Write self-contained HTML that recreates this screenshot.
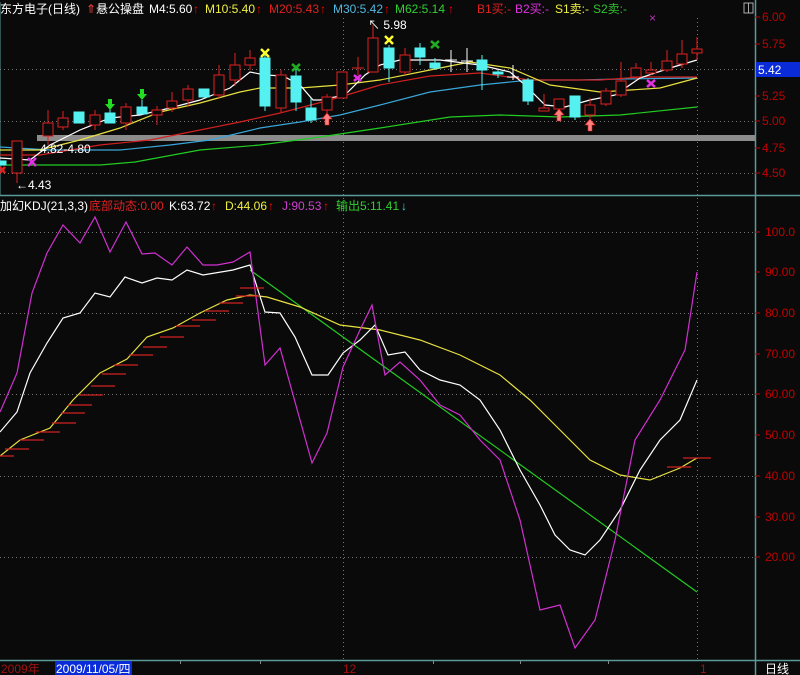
<!DOCTYPE html>
<html><head><meta charset="utf-8"><style>
html,body{margin:0;padding:0;background:#000;width:800px;height:675px;overflow:hidden}
svg{display:block}
text{font-family:"Liberation Sans","Noto Sans CJK SC",sans-serif;font-size:12px}
</style></head><body>
<svg width="800" height="675" viewBox="0 0 800 675" xmlns="http://www.w3.org/2000/svg">
<rect width="800" height="675" fill="#0a0a0a"/>
<!-- frame lines -->
<line x1="755.5" y1="0" x2="755.5" y2="675" stroke="#5a9a9a" stroke-width="1.5"/>
<line x1="0" y1="195.5" x2="800" y2="195.5" stroke="#5a9a9a" stroke-width="1.5"/>
<line x1="0" y1="660.5" x2="800" y2="660.5" stroke="#5a9a9a" stroke-width="1.5"/>
<line x1="0" y1="2" x2="0" y2="195" stroke="#5a9a9a"/>
<!-- gridlines -->
<g stroke="#777" stroke-dasharray="1,3">
<line x1="0" y1="69.5" x2="755" y2="69.5"/><line x1="0" y1="121.5" x2="755" y2="121.5"/><line x1="0" y1="173.5" x2="755" y2="173.5"/>
<line x1="0" y1="232.5" x2="755" y2="232.5"/><line x1="0" y1="313.5" x2="755" y2="313.5"/><line x1="0" y1="394.5" x2="755" y2="394.5"/><line x1="0" y1="476.5" x2="755" y2="476.5"/><line x1="0" y1="557.5" x2="755" y2="557.5"/>
<line x1="343.5" y1="18" x2="343.5" y2="660"/><line x1="697.5" y1="18" x2="697.5" y2="660"/>
</g>
<!-- upper axis -->
<g fill="#c00000" font-size="12"><text x="762" y="21">6.00</text><text x="762" y="48">5.75</text><text x="762" y="100">5.25</text><text x="762" y="125">5.00</text><text x="762" y="152">4.75</text><text x="762" y="177">4.50</text></g>
<g stroke="#c00000"><line x1="755" y1="17" x2="760" y2="17"/><line x1="755" y1="44" x2="760" y2="44"/><line x1="755" y1="96" x2="760" y2="96"/><line x1="755" y1="121" x2="760" y2="121"/><line x1="755" y1="148" x2="760" y2="148"/><line x1="755" y1="173" x2="760" y2="173"/></g>
<rect x="756" y="62" width="44" height="15" fill="#0a2cd8"/><text x="758" y="74" fill="#fff" font-size="13">5.42</text>
<rect x="744" y="3" width="9" height="10" fill="none" stroke="#aaa"/><line x1="748.5" y1="3" x2="748.5" y2="13" stroke="#aaa"/>
<!-- lower axis -->
<g fill="#c00000"><text x="765" y="236">100.0</text><text x="765" y="276">90.00</text><text x="765" y="317">80.00</text><text x="765" y="358">70.00</text><text x="765" y="398">60.00</text><text x="765" y="439">50.00</text><text x="765" y="480">40.00</text><text x="765" y="521">30.00</text><text x="765" y="561">20.00</text></g>
<g stroke="#c00000"><line x1="755" y1="232" x2="760" y2="232"/><line x1="755" y1="272" x2="760" y2="272"/><line x1="755" y1="313" x2="760" y2="313"/><line x1="755" y1="354" x2="760" y2="354"/><line x1="755" y1="394" x2="760" y2="394"/><line x1="755" y1="435" x2="760" y2="435"/><line x1="755" y1="476" x2="760" y2="476"/><line x1="755" y1="517" x2="760" y2="517"/><line x1="755" y1="557" x2="760" y2="557"/></g>
<!-- gray band -->
<rect x="37" y="135" width="718" height="6" fill="#8c8c8c"/>
<!-- MAs -->
<g fill="none" stroke-width="1.2">
<polyline stroke="#22cc22" points="0,165 100,165 135,162 200,150 260,145 320,137 380,128 450,117 500,115 560,117 620,115 697,107"/>
<polyline stroke="#3aa6d8" points="0,147 50,150 120,150 170,145 210,140 260,128 300,122 340,115 380,105 430,92 480,85 530,80 580,80 620,79 697,78"/>
<polyline stroke="#d02020" points="0,155 40,155 100,145 150,140 200,130 240,122 280,113 330,100 380,85 430,76 480,73 530,80 570,80 600,80 640,77 697,77"/>
<polyline stroke="#e8e040" points="0,150 40,150 80,140 120,128 160,112 200,103 240,92 260,88 300,88 340,85 380,80 430,70 470,62 510,68 550,85 600,92 630,90 660,88 697,78"/>
<polyline stroke="#fff" points="0,158 30,160 50,145 80,130 110,118 140,115 170,108 200,100 230,88 250,72 265,75 283,76 300,85 313,100 320,100 345,95 365,75 380,65 400,60 440,60 480,65 510,72 525,85 545,105 565,107 590,100 615,95 640,78 670,68 697,60"/>
</g>
<!-- candles -->
<g stroke="#e02020" fill="none">
<line x1="17" y1="141" x2="17" y2="183"/><rect x="12" y="141" width="10" height="32" fill="#0a0a0a"/>
<line x1="48" y1="110" x2="48" y2="145"/><rect x="43" y="123" width="10" height="13" fill="#0a0a0a"/>
<line x1="63" y1="111" x2="63" y2="130"/><rect x="58" y="118" width="10" height="9" fill="#0a0a0a"/>
<line x1="95" y1="110" x2="95" y2="130"/><rect x="90" y="115" width="10" height="10" fill="#0a0a0a"/>
<line x1="126" y1="103" x2="126" y2="130"/><rect x="121" y="107" width="10" height="16" fill="#0a0a0a"/>
<line x1="157" y1="106" x2="157" y2="125"/><rect x="152" y="110" width="10" height="5" fill="#0a0a0a"/>
<line x1="172" y1="92" x2="172" y2="112"/><rect x="167" y="101" width="10" height="7" fill="#0a0a0a"/>
<line x1="188" y1="85" x2="188" y2="107"/><rect x="183" y="89" width="10" height="11" fill="#0a0a0a"/>
<line x1="219" y1="65" x2="219" y2="99"/><rect x="214" y="75" width="10" height="20" fill="#0a0a0a"/>
<line x1="235" y1="53" x2="235" y2="86"/><rect x="230" y="65" width="10" height="15" fill="#0a0a0a"/>
<line x1="250" y1="50" x2="250" y2="70"/><rect x="245" y="58" width="10" height="7" fill="#0a0a0a"/>
<line x1="281" y1="70" x2="281" y2="112"/><rect x="276" y="75" width="10" height="33" fill="#0a0a0a"/>
<line x1="327" y1="94" x2="327" y2="115"/><rect x="322" y="97" width="10" height="13" fill="#0a0a0a"/>
<rect x="337" y="72" width="10" height="26" fill="#0a0a0a"/>
<line x1="358" y1="57" x2="358" y2="75"/><line x1="352" y1="68" x2="364" y2="68"/>
<line x1="373" y1="25" x2="373" y2="72"/><rect x="368" y="38" width="10" height="34" fill="#0a0a0a"/>
<line x1="405" y1="48" x2="405" y2="75"/><rect x="400" y="55" width="10" height="17" fill="#0a0a0a"/>
<line x1="544" y1="94" x2="544" y2="111"/><rect x="539" y="108" width="10" height="3" fill="#0a0a0a"/>
<rect x="554" y="99" width="10" height="10" fill="#0a0a0a"/>
<line x1="590" y1="98" x2="590" y2="118"/><rect x="585" y="105" width="10" height="10" fill="#0a0a0a"/>
<line x1="606" y1="88" x2="606" y2="106"/><rect x="601" y="91" width="10" height="13" fill="#0a0a0a"/>
<line x1="621" y1="62" x2="621" y2="97"/><rect x="616" y="81" width="10" height="14" fill="#0a0a0a"/>
<line x1="636" y1="63" x2="636" y2="80"/><rect x="631" y="68" width="10" height="9" fill="#0a0a0a"/>
<line x1="651" y1="62" x2="651" y2="75"/><rect x="646" y="70" width="10" height="3" fill="#0a0a0a"/>
<line x1="667" y1="50" x2="667" y2="72"/><rect x="662" y="61" width="10" height="9" fill="#0a0a0a"/>
<line x1="682" y1="40" x2="682" y2="68"/><rect x="677" y="54" width="10" height="10" fill="#0a0a0a"/>
<line x1="697" y1="37" x2="697" y2="60"/><rect x="692" y="49" width="10" height="4" fill="#0a0a0a"/>
</g>
<g fill="#55f0f0" stroke="#55f0f0">
<rect x="0" y="161" width="6" height="4"/>
<rect x="74" y="112" width="10" height="11"/>
<rect x="105" y="113" width="10" height="10"/><line x1="110" y1="105" x2="110" y2="113"/>
<rect x="137" y="107" width="10" height="7"/><line x1="142" y1="100" x2="142" y2="107"/>
<rect x="199" y="89" width="10" height="8"/>
<line x1="265" y1="53" x2="265" y2="111"/><rect x="260" y="58" width="10" height="48"/>
<line x1="296" y1="68" x2="296" y2="111"/><rect x="291" y="76" width="10" height="26"/>
<line x1="311" y1="98" x2="311" y2="123"/><rect x="306" y="108" width="10" height="12"/>
<line x1="389" y1="45" x2="389" y2="82"/><rect x="384" y="48" width="10" height="20"/>
<line x1="420" y1="43" x2="420" y2="65"/><rect x="415" y="48" width="10" height="9"/>
<line x1="435" y1="58" x2="435" y2="70"/><rect x="430" y="63" width="10" height="5"/>
<line x1="482" y1="55" x2="482" y2="90"/><rect x="477" y="60" width="10" height="10"/>
<line x1="498" y1="70" x2="498" y2="78"/><rect x="493" y="72" width="10" height="2"/>
<line x1="528" y1="78" x2="528" y2="105"/><rect x="523" y="80" width="10" height="21"/>
<line x1="575" y1="96" x2="575" y2="120"/><rect x="570" y="96" width="10" height="21"/>
</g>
<g stroke="#fff"><line x1="451" y1="50" x2="451" y2="72"/><line x1="445" y1="60" x2="457" y2="60"/><line x1="467" y1="48" x2="467" y2="72"/><line x1="461" y1="61" x2="473" y2="61"/><line x1="513" y1="65" x2="513" y2="80"/><line x1="507" y1="77" x2="519" y2="77"/></g>
<!-- markers -->
<g stroke-width="2.5">
<g stroke="#ffff30"><path d="M261,49l8,8M269,49l-8,8"/><path d="M385,36l8,8M393,36l-8,8"/></g>
<g stroke="#22aa22"><path d="M292,64l8,7M300,64l-8,7"/><path d="M431,41l8,7M439,41l-8,7"/></g>
<g stroke="#e030e0"><path d="M28,158l8,8M36,158l-8,8"/><path d="M354,75l7,6M361,75l-7,6"/><path d="M647,80l8,7M655,80l-8,7"/></g>
<path d="M0,167l5,6M5,167l-5,6" stroke="#e02020"/>
</g>
<text x="649" y="22" fill="#c030c0" font-size="9">×</text>
<g fill="#22dd22"><path d="M108,99h4v5h3l-5,6l-5,-6h3z"/><path d="M140,89h4v5h3l-5,6l-5,-6h3z"/></g>
<g fill="#ff8080" stroke="#e02020" stroke-width="0.6"><path d="M325,125v-6h-3l5,-6l5,6h-3v6z"/><path d="M557,121v-6h-3l5,-6l5,6h-3v6z"/><path d="M588,131v-6h-3l5,-6l5,6h-3v6z"/></g>
<text x="16" y="189" fill="#fff">←4.43</text>
<text x="40" y="153" fill="#fff">4.82-4.80</text>
<text x="368" y="29" fill="#fff">↖ 5.98</text>
<!-- header -->
<text x="0" y="13" fill="#fff" font-size="13">东方电子(日线)</text>
<text x="86" y="13" fill="#ff4040" font-size="13">⇑</text>
<text x="96" y="13" fill="#fff" font-size="13">悬公操盘</text>
<text x="149" y="13" fill="#fff" font-size="13">M4:5.60</text><text x="193" y="13" fill="#f00">↑</text>
<text x="205" y="13" fill="#f0f040" font-size="13">M10:5.40</text><text x="256" y="13" fill="#f00">↑</text>
<text x="269" y="13" fill="#e02020" font-size="13">M20:5.43</text><text x="320" y="13" fill="#f00">↑</text>
<text x="333" y="13" fill="#50b8e0" font-size="13">M30:5.42</text><text x="384" y="13" fill="#f00">↑</text>
<text x="395" y="13" fill="#30d030" font-size="13">M62:5.14</text><text x="448" y="13" fill="#f00">↑</text>
<text x="477" y="13" fill="#e02020" font-size="13">B1买:-</text>
<text x="515" y="13" fill="#e030e0" font-size="13">B2买:-</text>
<text x="555" y="13" fill="#f0f040" font-size="13">S1卖:-</text>
<text x="593" y="13" fill="#30c030" font-size="13">S2卖:-</text>
<!-- KDJ header -->
<text x="0" y="210" fill="#fff" font-size="13">加幻KDJ(21,3,3)</text>
<text x="89" y="210" fill="#e02020" font-size="13">底部动态:0.00</text>
<text x="169" y="210" fill="#fff" font-size="13">K:63.72</text><text x="211" y="210" fill="#f00">↑</text>
<text x="225" y="210" fill="#f0f040" font-size="13">D:44.06</text><text x="268" y="210" fill="#f00">↑</text>
<text x="282" y="210" fill="#d040d0" font-size="13">J:90.53</text><text x="323" y="210" fill="#f00">↑</text>
<text x="336" y="210" fill="#30d030" font-size="13">输出5:11.41</text><text x="401" y="210" fill="#40d0e0">↓</text>
<!-- KDJ lines -->
<g fill="none" stroke-width="1.2">
<line x1="250" y1="270" x2="697" y2="592" stroke="#22cc22"/>
<polyline stroke="#e8e040" points="0,456 20,440 50,428 73,400 100,373 127,359 147,337 173,328 200,313 227,300 250,295 267,297 300,307 340,325 380,330 420,340 460,355 500,375 530,400 560,430 590,460 620,475 650,480 680,468 697,458"/>
<polyline stroke="#fff" points="0,432 17,412 30,373 47,343 63,318 80,313 95,293 110,297 125,277 142,283 157,278 172,280 187,270 203,275 233,270 250,265 265,312 280,313 295,337 312,375 328,375 343,353 360,340 375,325 388,355 405,352 420,370 440,380 460,385 480,400 500,430 520,470 540,505 555,535 570,550 585,555 600,540 620,510 640,470 660,440 680,420 697,380"/>
<polyline stroke="#d030d0" points="0,412 17,373 32,293 47,253 63,225 80,243 95,217 110,252 126,222 142,254 155,253 172,265 187,247 203,265 217,265 233,262 250,252 265,365 280,348 312,463 327,433 343,367 360,330 372,305 385,375 400,362 420,380 440,405 460,415 480,440 500,460 520,520 540,610 560,605 575,648 595,620 615,540 635,440 660,400 685,350 697,272"/>
</g>
<g stroke="#d02020" stroke-width="1.2">
<path d="M0,456h14M5,449h24M20,440h24M36,432h24M52,423h24M61,413h24M68,405h24M79,395h24M91,386h24M102,374h24M114,365h24M129,355h24M143,347h24M160,337h24M176,326h24M192,320h24M205,311h24M219,303h24M236,296h24M240,288h24"/>
<path d="M683,458h28M667,467h24"/>
</g>
<!-- bottom axis -->
<text x="1" y="673" fill="#a01010">2009年</text>
<rect x="55" y="661" width="77" height="14" fill="#0a2cd8"/>
<text x="56" y="673" fill="#fff">2009/11/05/四</text>
<text x="343" y="673" fill="#a01010">12</text>
<text x="700" y="673" fill="#a01010">1</text>
<text x="765" y="673" fill="#fff">日线</text>
<g stroke="#888"><line x1="180.5" y1="661" x2="180.5" y2="664"/><line x1="260.5" y1="661" x2="260.5" y2="664"/><line x1="433.5" y1="661" x2="433.5" y2="664"/><line x1="520.5" y1="661" x2="520.5" y2="664"/><line x1="608.5" y1="661" x2="608.5" y2="664"/></g>
</svg>
</body></html>
